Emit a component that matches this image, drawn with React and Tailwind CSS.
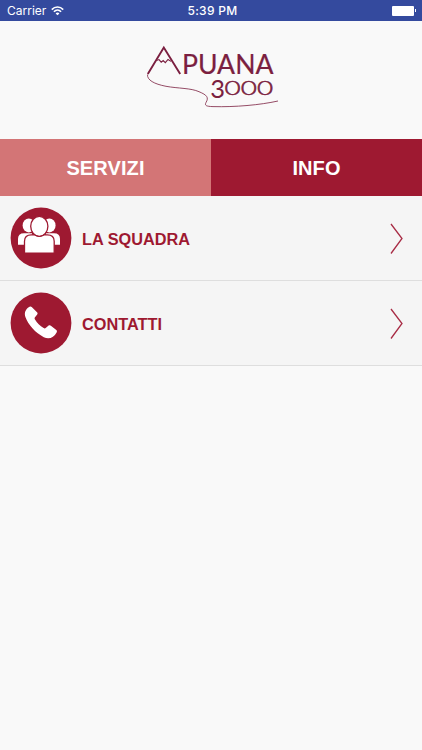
import React, { useState } from 'react';

const StatusBar = () => (
  <div className="relative flex h-[21px] items-center justify-between bg-[#344a9e] pl-[7px] pr-[6px] font-['Inter','Liberation_Sans',sans-serif] text-[12px] leading-none text-white">
    <div className="flex items-center gap-[5px]">
      <span className="w-[39px] whitespace-nowrap">Carrier</span>
      <svg width="13" height="10" viewBox="0 0 13 10" fill="none" stroke="white" strokeWidth="1.6">
        <path d="M0.8 3.6C4 0.2 9 0.2 12.2 3.6" />
        <path d="M2.9 5.7C5 3.6 8 3.6 10.1 5.7" />
        <path d="M6.5 9.3L4.6 7.4C5.7 6.3 7.3 6.3 8.4 7.4Z" fill="white" stroke="none" />
      </svg>
    </div>
    <span className="absolute inset-x-0 pl-[3px] text-center font-medium tracking-[0.3px]">5:39 PM</span>
    <div className="flex items-center gap-[1px]">
      <div className="h-[10px] w-[22px] rounded-[1px] bg-white" />
      <div className="h-[3px] w-[1px] bg-white" />
    </div>
  </div>
);

const Logo = () => (
  <svg width="145" height="75" viewBox="0 0 145 75" fill="none" stroke="#7b1f40">
    <path d="M7.8 36L23.8 9.6L40.2 36" strokeWidth="1.9" />
    <path d="M16.5 22.4L19 21.6L21.2 24.2L23.2 22.6L25.3 24.6L28 21.5L31 23.4" strokeWidth="1.1" />
    <path
      d="M7.5 36.5C7 42 14 46 26 48.3C38 50.5 51 50 59 53.7C67 57 69 59.5 66 64.5C64.5 67.5 66 68.4 73 68.6C95 69.2 120 67 138 63"
      strokeWidth="0.8"
    />
    <text fill="#7b1f40" stroke="#7b1f40" strokeWidth="0.2" className="font-['Lato','Liberation_Sans',sans-serif]">
      <tspan x="42" y="36.3" fontSize="26" textLength="91.5" lengthAdjust="spacingAndGlyphs">PUANA</tspan>
      <tspan x="70.3" y="60" fontSize="25.5" strokeWidth="0">3</tspan>
      <tspan x="84.6" y="57" fontSize="20.5" fontWeight="300" strokeWidth="0.5" textLength="48.5" lengthAdjust="spacingAndGlyphs">000</tspan>
    </text>
  </svg>
);

const TeamIcon = () => (
  <svg width="62" height="62" viewBox="0 0 62 62">
    <circle cx="31" cy="31" r="30.4" fill="#9e1931" />
    <g fill="white">
      <ellipse cx="18.8" cy="18.4" rx="6.2" ry="7" />
      <ellipse cx="39.4" cy="18.4" rx="6.2" ry="7" />
      <path d="M8 37.8V32Q8 26.2 14 26.2H22V37.8Z" />
      <path d="M50 37.8V32Q50 26.2 44 26.2H36V37.8Z" />
    </g>
    <g fill="white" stroke="#9e1931" strokeWidth="1.3">
      <path d="M14.5 46.1V34.2Q14.5 27.8 21.3 27.8H24.6Q29.3 31 34 27.8H37.3Q44.2 27.8 44.2 34.2V46.1Z" />
      <ellipse cx="29.3" cy="19.3" rx="8.6" ry="10" />
    </g>
  </svg>
);

const PhoneIcon = () => (
  <svg width="62" height="62" viewBox="0 0 62 62">
    <circle cx="31" cy="31" r="30.4" fill="#9e1931" />
    <path
      d="M19.6 14.8C20.3 14.4 21.1 14.5 21.7 15.1L27 20.3C27.7 21 27.8 21.7 27.2 22.5L25 25.2C24.4 26 24.5 26.7 25 27.6C27 31 30 33.9 33.6 36.1C34.5 36.6 35.2 36.5 36 35.8L38.6 33.6C39.4 33 40.2 33.1 40.9 33.7L46.3 38.1C47.1 38.8 47.1 39.7 46.6 40.5C43.8 45.7 39 47.7 33.8 45.2C25.5 41 18 32.7 15.4 25.1C13.9 20.5 15.8 16.7 19.6 14.8Z"
      fill="white"
    />
  </svg>
);

const items = [
  { label: 'LA SQUADRA', icon: <TeamIcon />, length: 108 },
  { label: 'CONTATTI', icon: <PhoneIcon />, length: 80 }
];

const App = () => {
  const [activeTab, setActiveTab] = useState('info');

  return (
    <div className="flex min-h-screen flex-col bg-[#f9f9f9] font-['Liberation_Sans',Arial,sans-serif]">
      <StatusBar />
      <header className="flex h-[118px] justify-center pl-[3px] pt-[17px]">
        <Logo />
      </header>
      <div className="grid h-[57px] grid-cols-2 text-[20px] font-bold tracking-[0.1px] text-white">
        <button
          onClick={() => setActiveTab('servizi')}
          className={activeTab === 'servizi' ? 'bg-[#9e1931]' : 'bg-[#d37576]'}
        >
          SERVIZI
        </button>
        <button
          onClick={() => setActiveTab('info')}
          className={activeTab === 'info' ? 'bg-[#9e1931]' : 'bg-[#d37576]'}
        >
          INFO
        </button>
      </div>
      <ul>
        {items.map(item => (
          <li
            key={item.label}
            className="flex h-[85px] items-center border-b border-[#dedede] bg-[#f5f5f5] pl-[10px] pr-[19px]"
          >
            <div className="mb-[1px]">{item.icon}</div>
            <svg className="ml-[10px] mt-[2px] h-[26px] w-[130px]">
              <text x="0" y="19.4" fontSize="17.2" fontWeight="bold" fill="#9e1931" textLength={item.length} lengthAdjust="spacingAndGlyphs">
                {item.label}
              </text>
            </svg>
            <svg className="ml-auto mt-[2px]" width="13" height="32" viewBox="0 0 13 32" fill="none" stroke="#a82c45" strokeWidth="1.3">
              <path d="M1 1L12 15.5L1 30.5" />
            </svg>
          </li>
        ))}
      </ul>
    </div>
  );
};

export default App;
